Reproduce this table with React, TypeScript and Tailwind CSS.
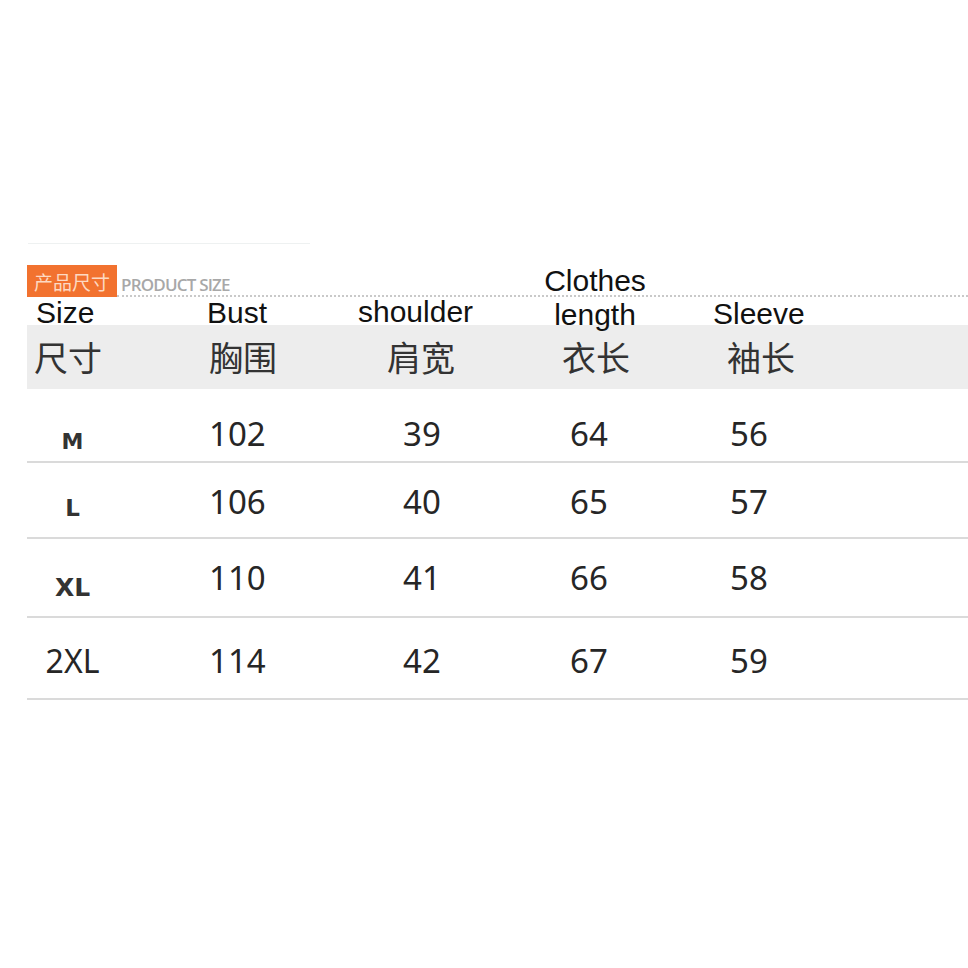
import React from "react";

const EN = "font-['Liberation_Sans',Arial,sans-serif]";
const CJK = "font-['Noto_Sans_CJK_SC',sans-serif]";
const NUM = "font-['Noto_Sans',sans-serif]";
const BOLDLBL = "font-['DejaVu_Sans',sans-serif] font-bold";

type Row = {
  size: string;
  sizeCls: string;
  rowCls: string;
  vals: [string, string, string, string];
};

const rows: Row[] = [
  { size: "M", sizeCls: `${BOLDLBL} text-[22px] mt-[17px] text-[#333]`, rowCls: "h-[74px] pt-[16px]", vals: ["102", "39", "64", "56"] },
  { size: "L", sizeCls: `${BOLDLBL} text-[23px] mt-[15px] text-[#333]`, rowCls: "h-[76px] pt-[2px]", vals: ["106", "40", "65", "57"] },
  { size: "XL", sizeCls: `${BOLDLBL} text-[25px] mt-[20px] text-[#333]`, rowCls: "h-[79px] pt-0", vals: ["110", "41", "66", "58"] },
  { size: "2XL", sizeCls: `${NUM} text-[32px] mt-[1px] text-[#262626]`, rowCls: "h-[82px] pt-[5px]", vals: ["114", "42", "67", "59"] },
];

export default function App() {
  return (
    <div className="w-[968px] h-[968px] bg-white overflow-hidden pt-[243px]">
      {/* faint top line */}
      <div className="ml-[28px] w-[282px] h-px bg-[#eef1f1]" />

      {/* title row */}
      <div className="ml-[27px] mt-[21px] flex h-[32px]">
        <div className={`w-[90px] h-full bg-[#f2722f] flex items-center justify-center ${CJK} text-[19px] leading-none text-[#fdd9c2]`}>
          产品尺寸
        </div>
        <div className="flex-1 flex items-end border-b-2 border-dotted border-[#c9c9c9] pl-[4px] pb-[2px]">
          <span className="font-['Open_Sans',sans-serif] font-semibold text-[17px] leading-none tracking-[-0.8px] text-[#a8a8a8]">
            PRODUCT SIZE
          </span>
        </div>
      </div>

      {/* English labels */}
      <div className={`ml-[27px] -mt-[33px] flex items-end ${EN} text-[30px] leading-[34px] text-[#111]`}>
        <div className="w-[143px] pl-[9px] pb-[2px]">Size</div>
        <div className="w-[160px] pl-[37px] pb-[2px]">Bust</div>
        <div className="w-[180px] pl-[28px] pb-[3px]">shoulder</div>
        <div className="w-[170px] text-center">
          Clothes
          <br />
          length
        </div>
        <div className="flex-1 pl-[33px] pb-[1px]">Sleeve</div>
      </div>

      {/* Chinese header band */}
      <div className={`ml-[27px] -mt-[7px] h-[64px] bg-[#ededed] flex items-center ${CJK} text-[34px] leading-none text-[#333]`}>
        <div className="w-[143px] pl-[7px]">尺寸</div>
        <div className="w-[160px] pl-[39px]">胸围</div>
        <div className="w-[180px] pl-[57px]">肩宽</div>
        <div className="w-[170px] pl-[52px]">衣长</div>
        <div className="flex-1 pl-[47px]">袖长</div>
      </div>

      {/* data rows */}
      {rows.map((r) => (
        <div
          key={r.size}
          className={`ml-[27px] flex items-center border-b-2 border-[#dadada] ${r.rowCls}`}
        >
          <div className="w-[143px]">
            <div className={`w-[91px] text-center leading-none ${r.sizeCls}`}>{r.size}</div>
          </div>
          <div className={`w-[160px] pl-[39px] ${NUM} text-[33px] leading-none text-[#262626]`}>{r.vals[0]}</div>
          <div className={`w-[180px] pl-[73px] ${NUM} text-[33px] leading-none text-[#262626]`}>{r.vals[1]}</div>
          <div className={`w-[170px] pl-[60px] ${NUM} text-[33px] leading-none text-[#262626]`}>{r.vals[2]}</div>
          <div className={`flex-1 pl-[50px] ${NUM} text-[33px] leading-none text-[#262626]`}>{r.vals[3]}</div>
        </div>
      ))}
    </div>
  );
}
